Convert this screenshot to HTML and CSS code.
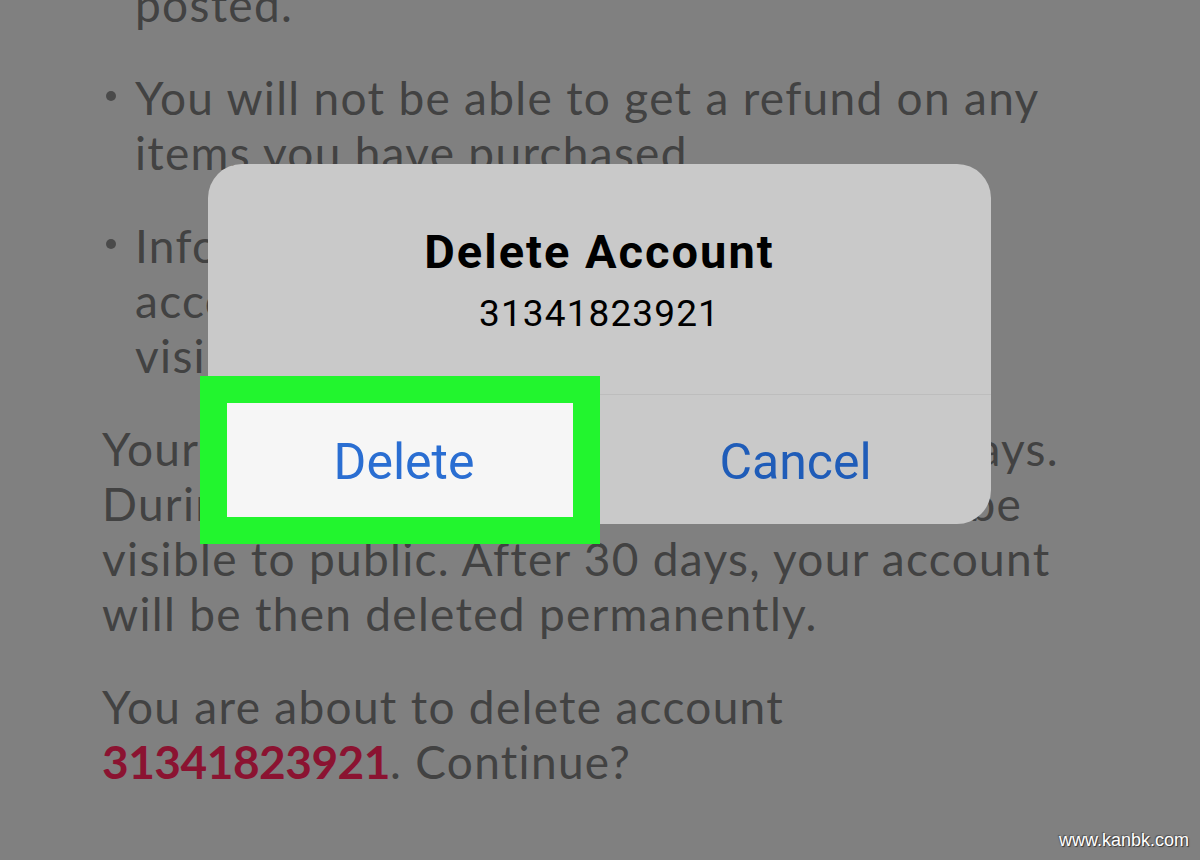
FILE: index.html
```html
<!DOCTYPE html>
<html>
<head>
<meta charset="utf-8">
<link rel="stylesheet" href="styles.css">
</head>
<body>
<div class="page">
  <div class="content">
    <ul class="bullets">
      <li class="first"><span class="ln">posted.</span></li>
      <li class="dot"><span class="ln">You will not be able to get a refund on any</span><span class="ln">items you have purchased.</span></li>
      <li class="dot"><span class="ln">Information that is not stored in your</span><span class="ln">account, such as chat messages, will be</span><span class="ln">visible to others.</span></li>
    </ul>
    <p class="para"><span class="ln">Your account will be deactivated for 30 days.</span><span class="ln">During deactivation, your account won't be</span><span class="ln">visible to public. After 30 days, your account</span><span class="ln">will be then deleted permanently.</span></p>
    <p class="para"><span class="ln">You are about to delete account</span><span class="ln"><strong class="acct">31341823921</strong>. Continue?</span></p>
  </div>

  <div class="dialog">
    <div class="dialog-head">
      <div class="dialog-title">Delete Account</div>
      <div class="dialog-sub">31341823921</div>
    </div>
    <div class="dialog-actions">
      <div class="action action-delete">
        <span class="highlight"></span>
        <span class="action-label">Delete</span>
      </div>
      <div class="action action-cancel">
        <span class="action-label">Cancel</span>
      </div>
    </div>
  </div>

  <div class="watermark">www.kanbk.com</div>
</div>
</body>
</html>
```

FILE: styles.css
```css
html, body {
  margin: 0;
  padding: 0;
}
body {
  background: #808080;
  width: 1200px;
  height: 860px;
  overflow: hidden;
}
.page {
  position: relative;
  width: 1200px;
  height: 860px;
  overflow: hidden;
}
.content {
  margin-top: -23px;
  padding-left: 102px;
  font-family: Lato, "Open Sans", sans-serif;
  font-size: 46px;
  line-height: 55px;
  letter-spacing: 1.3px;
  color: #424242;
}
.ln {
  display: block;
  white-space: nowrap;
}
.bullets {
  list-style: none;
  margin: 0;
  padding: 0 0 0 33px;
}
.bullets li {
  position: relative;
  margin: 0 0 38px 0;
}
.bullets li.dot::before {
  content: "";
  position: absolute;
  left: -29px;
  top: 21px;
  width: 10px;
  height: 10px;
  border-radius: 50%;
  background: #4a4a4a;
}
.para {
  margin: 0 0 38px 0;
}
.acct {
  color: #8b1331;
  font-weight: 700;
  letter-spacing: -0.5px;
}

.dialog {
  position: absolute;
  left: 208px;
  top: 164px;
  width: 783px;
  height: 360px;
  background: #c9c9c9;
  border-radius: 34px;
  display: flex;
  flex-direction: column;
  font-family: Roboto, "Liberation Sans", sans-serif;
}
.dialog-head {
  height: 231px;
  box-sizing: border-box;
  padding-top: 60px;
  text-align: center;
  border-bottom: 1px solid #bdbdbd;
}
.dialog-title {
  font-size: 47px;
  line-height: 56px;
  font-weight: 700;
  letter-spacing: 2px;
  color: #000;
}
.dialog-sub {
  margin-top: 12px;
  font-size: 37px;
  line-height: 44px;
  letter-spacing: 1.1px;
  color: #000;
}
.dialog-actions {
  flex: 1;
  display: grid;
  grid-template-columns: 392px 1fr;
}
.action {
  position: relative;
  display: flex;
  align-items: center;
  justify-content: center;
  padding-top: 4px;
  box-sizing: border-box;
}
.action-label {
  position: relative;
  font-size: 50px;
  line-height: 60px;
}
.action-delete .action-label {
  color: #2a6ed2;
}
.action-cancel .action-label {
  color: #1f5cb8;
}
.highlight {
  position: absolute;
  left: -8px;
  top: -19px;
  width: 346px;
  height: 114px;
  border: 27px solid #22f52e;
  background: #f6f6f6;
}

.watermark {
  position: absolute;
  right: 11px;
  bottom: 9px;
  font-family: "Liberation Sans", Arial, sans-serif;
  font-size: 18px;
  color: #ffffff;
  text-shadow: 1px 1px 1px #333, -1px -1px 1px #555;
}
```
